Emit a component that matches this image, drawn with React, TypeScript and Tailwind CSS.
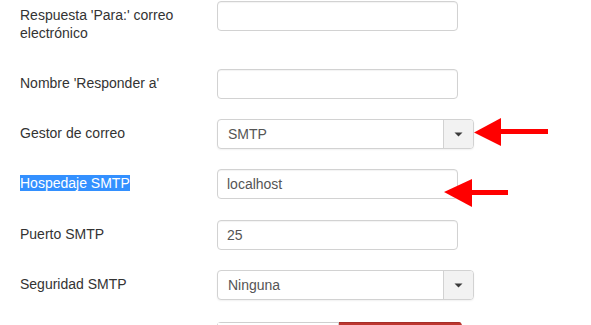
import React from "react";

type Field = {
  label: string;
  kind: "text" | "select";
  value?: string;
  top: string;
  selected?: boolean;
};

const fields: Field[] = [
  { label: "Respuesta 'Para:' correo electrónico", kind: "text", top: "mt-[1px]" },
  { label: "Nombre 'Responder a'", kind: "text", top: "mt-[27px]" },
  { label: "Gestor de correo", kind: "select", value: "SMTP", top: "mt-[20px]" },
  { label: "Hospedaje SMTP", kind: "text", value: "localhost", top: "mt-[20px]", selected: true },
  { label: "Puerto SMTP", kind: "text", value: "25", top: "mt-[21px]" },
  { label: "Seguridad SMTP", kind: "select", value: "Ninguna", top: "mt-[20px]" },
];

function Caret() {
  return (
    <svg width="9" height="5" viewBox="0 0 9 5" className="block">
      <path d="M0.5 0.5h8L4.5 4.5z" fill="#3a3a3a" />
    </svg>
  );
}

function TextInput({ value }: { value?: string }) {
  return (
    <div className="h-[30px] w-[241px] rounded-[4px] border border-[#d2d2d2] bg-white pl-[9px] flex items-center text-[14px] text-[#555] shadow-[inset_0_1px_1px_rgba(0,0,0,0.05)]">
      {value}
    </div>
  );
}

function SelectInput({ value }: { value?: string }) {
  return (
    <div className="h-[30px] w-[257px] rounded-[4px] border border-[#d2d2d2] bg-white flex items-stretch shadow-[0_1px_2px_rgba(0,0,0,0.06)]">
      <div className="flex-1 pl-[10px] flex items-center text-[14px] text-[#555]">{value}</div>
      <div className="w-[30px] border-l border-[#d2d2d2] bg-[#f2f2f2] rounded-r-[3px] flex items-center justify-center">
        <Caret />
      </div>
    </div>
  );
}

export default function App() {
  return (
    <div
      className="relative h-[325px] w-[591px] overflow-hidden bg-white"
      style={{ fontFamily: '"Liberation Sans", Arial, sans-serif' }}
    >
      <div className="flex flex-col pl-5">
        {fields.map((f) => (
          <div key={f.label} className={`flex items-start ${f.top}`}>
            <div className="w-[197px] pt-[5px] pr-6 text-[14px] leading-[18px] text-[#333]">
              {f.selected ? (
                <span className="bg-[#3390ff] text-white">{f.label}</span>
              ) : (
                f.label
              )}
            </div>
            {f.kind === "text" ? <TextInput value={f.value} /> : <SelectInput value={f.value} />}
          </div>
        ))}

        {/* radio group peeking from the bottom */}
        <div className="flex mt-[22px]">
          <div className="w-[197px]" />
          <div className="flex h-[20px] w-[245px] overflow-hidden rounded-t-[4px]">
            <div className="w-[122px] border border-[#cfcfcf] bg-white" />
            <div className="flex-1 bg-[#bd362f] border-t border-[#a52f29]" />
          </div>
        </div>
      </div>

      {/* red annotation arrows */}
      <svg className="absolute left-0 top-0 pointer-events-none" width="591" height="325">
        <polygon points="474,132.5 501,118 501,146" fill="#ff0000" />
        <rect x="500" y="129" width="48" height="5" fill="#ff0000" />
        <polygon points="444,192 472,179 472,207" fill="#ff0000" />
        <rect x="471" y="190" width="37" height="5" fill="#ff0000" />
      </svg>
    </div>
  );
}
